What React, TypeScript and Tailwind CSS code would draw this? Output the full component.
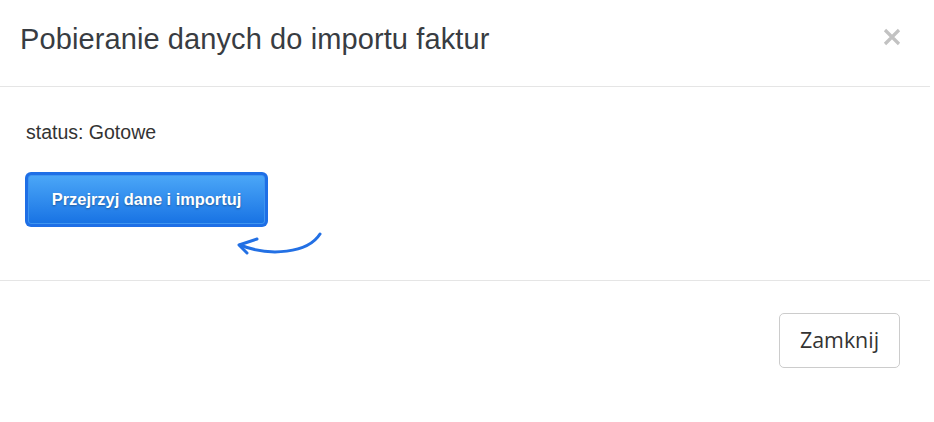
import React from "react";

export default function App() {
  return (
    <div className="w-[934px] h-[422px] bg-white overflow-hidden" style={{ fontFamily: '"Liberation Sans", Arial, sans-serif' }}>
      <div className="w-[930px]">
        <div className="h-[87px] border-b border-[#e5e5e5] flex items-center justify-between pl-[20px] pr-[28px]">
          <h1 className="text-[29px] text-[#383c42] tracking-[0.1px] pb-[6px]">Pobieranie danych do importu faktur</h1>
          <svg width="20" height="20" viewBox="0 0 20 20" className="mt-[-12px]">
            <path d="M3 3 L17 17 M17 3 L3 17" stroke="#c2c2c2" strokeWidth="3.2" strokeLinecap="butt" />
          </svg>
        </div>
        <div className="h-[194px] border-b border-[#e5e5e5] pl-[26px] pt-[31px] relative">
          <div className="text-[19.5px] text-[#333]">status: Gotowe</div>
          <button className="mt-[25px] ml-[-1px] w-[243px] h-[55px] rounded-[6px] bg-[#1e6fe6] p-[3px]">
            <div className="w-full h-full rounded-[3px] bg-gradient-to-b from-[#4aa6f7] to-[#1873e4] border border-[#3e95f0] flex items-center justify-center text-white font-bold text-[16.4px] [text-shadow:0_1px_2px_rgba(0,0,0,0.35)]">
              Przejrzyj dane i importuj
            </div>
          </button>
          <svg className="absolute left-[230px] top-[140px]" width="100" height="34" viewBox="0 0 100 34">
            <path d="M90 7 C 78 26, 40 30, 10 18" fill="none" stroke="#2370e4" strokeWidth="3" strokeLinecap="round" />
            <path d="M27 12 L9 18 L17 26" fill="none" stroke="#2370e4" strokeWidth="3" strokeLinecap="round" strokeLinejoin="round" />
          </svg>
        </div>
        <div className="flex justify-end pr-[30px] pt-[32px]">
          <button className="w-[121px] h-[55px] rounded-[5px] border border-[#cccccc] bg-white text-[21.4px] text-[#333]" style={{ fontFamily: '"Open Sans", sans-serif' }}>
            Zamknij
          </button>
        </div>
      </div>
    </div>
  );
}
